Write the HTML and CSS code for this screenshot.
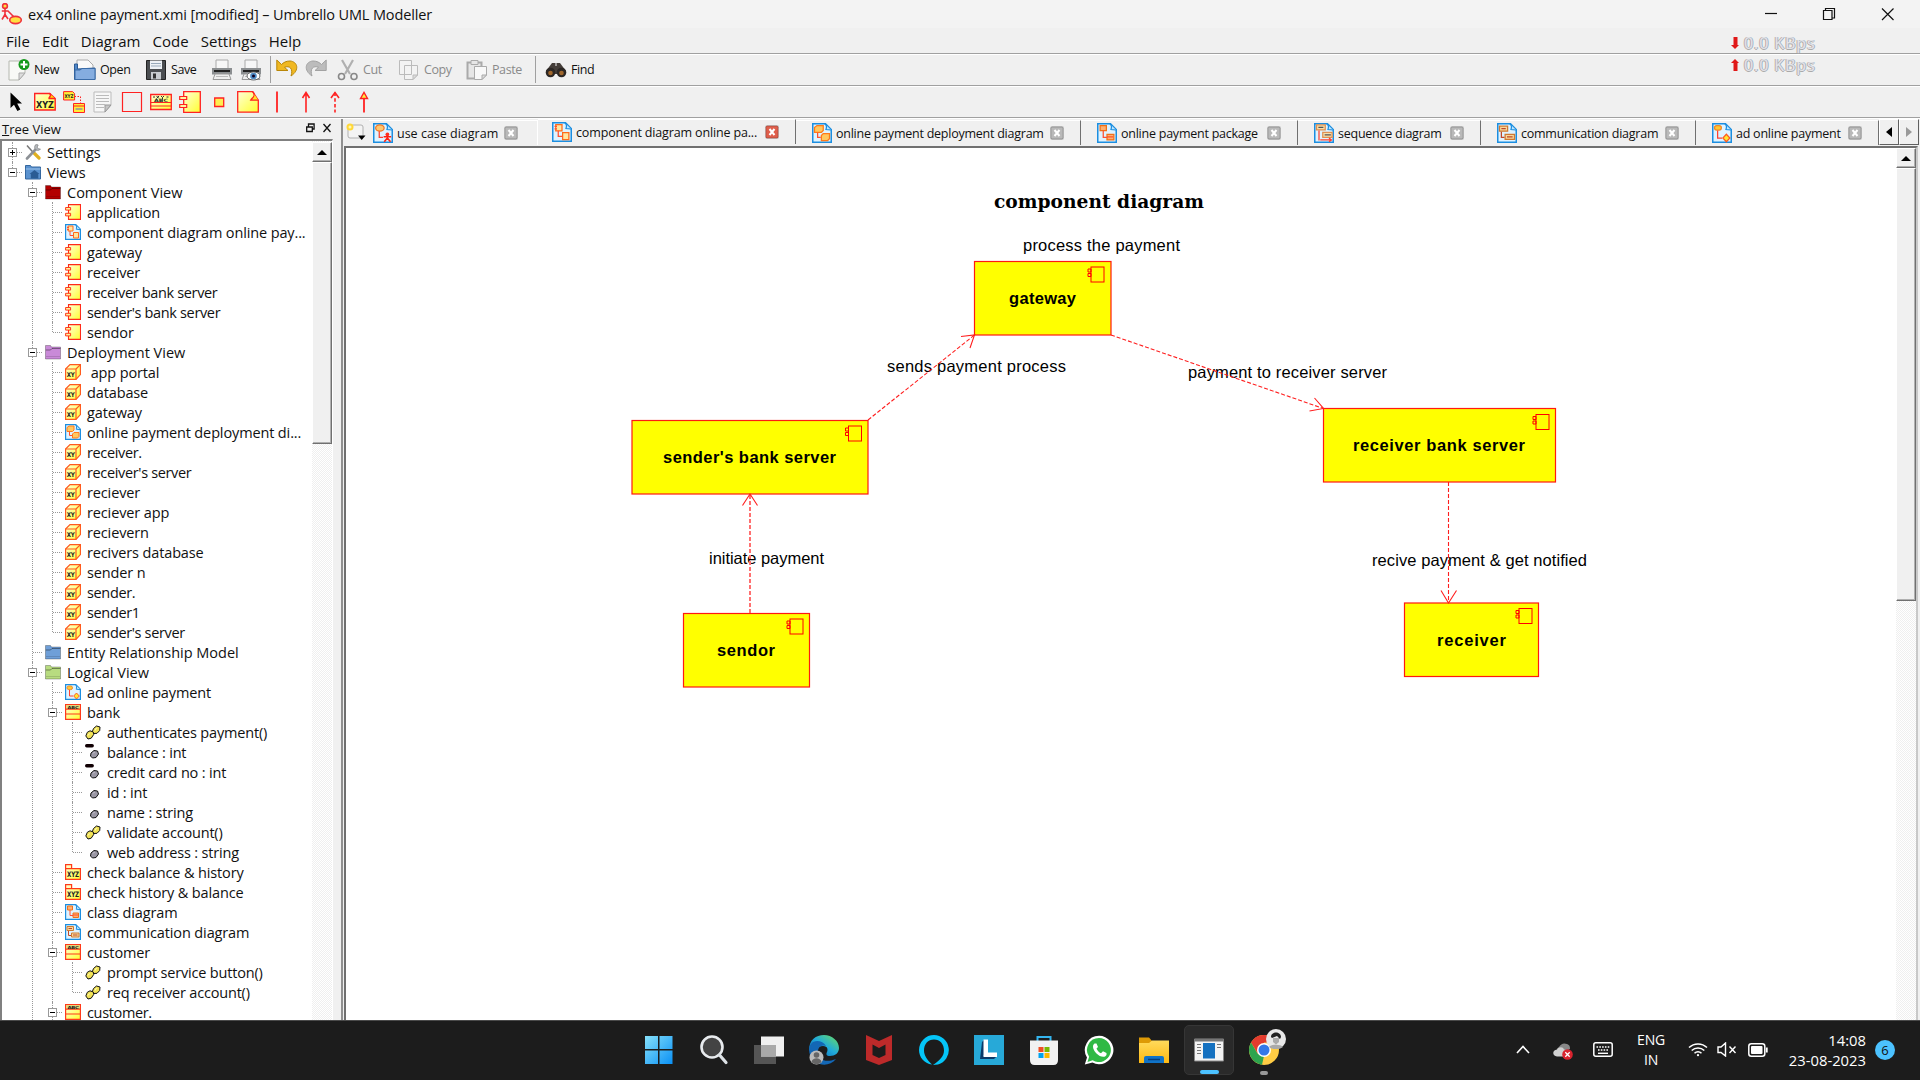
FILE: index.html
```html
<!DOCTYPE html>
<html lang="en">
<head>
<meta charset="utf-8">
<title>ex4 online payment.xmi [modified] – Umbrello UML Modeller</title>
<link rel="stylesheet" href="styles.css">
</head>
<body>
<svg class="defs" width="0" height="0">
  <defs>
    <linearGradient id="yel" x1="0" y1="0" x2="1" y2="1"><stop offset="0" stop-color="#ffffd8"/><stop offset="1" stop-color="#ffff30"/></linearGradient>
    <linearGradient id="win" x1="0" y1="0" x2="1" y2="1"><stop offset="0" stop-color="#86e1fb"/><stop offset="1" stop-color="#0a90f5"/></linearGradient>
    <linearGradient id="edge" x1="0" y1="1" x2="1" y2="0"><stop offset="0" stop-color="#0c59a4"/><stop offset=".5" stop-color="#1fa9dc"/><stop offset="1" stop-color="#6de05b"/></linearGradient>
    <linearGradient id="gold" x1="0" y1="0" x2="0" y2="1"><stop offset="0" stop-color="#ffdb5c"/><stop offset="1" stop-color="#fdb913"/></linearGradient>
  </defs>
  <symbol id="comp" viewBox="0 0 16 16"><path d="M3.5.6h12v14.8h-12z" fill="url(#yel)" stroke="#ff2a1a" stroke-width="1.1"/><path d="M.6 3.5h5v2.6h-5zM.6 9.3h5v2.6h-5z" fill="#fff0a0" stroke="#ff3a1a"/></symbol>
  <symbol id="page" viewBox="0 0 16 16"><path d="M.6.6h10.2l4.6 4.6v10.2H.6z" fill="#dff3ff" stroke="#1c8ee0" stroke-width="1.2"/><path d="M10.2.8c2 1 1.400 3.200 1 4.400l4 .4" fill="#bfe6ff" stroke="#1c8ee0"/></symbol>
  <symbol id="dcomp" viewBox="0 0 16 16"><use href="#page"/><path d="M3 2h5v5H3zM8.500 8.500h5v5.500h-5z" fill="#ffe6a0" stroke="#ff6a1a"/><path d="M2 3.500h2M2 5.500h2M5 7v4.500h3.500" fill="none" stroke="#ff5030"/></symbol>
  <symbol id="dnode" viewBox="0 0 16 16"><use href="#page"/><path d="M2 3.500 4 2h5v4L7.500 7.500H2zM7.500 10l1.500-1.500h5v4L12.500 14h-5z" fill="#ffc860" stroke="#ff7a1a"/><path d="M4.500 7.500v4H7" fill="none" stroke="#ff5030"/></symbol>
  <symbol id="dclass" viewBox="0 0 16 16"><use href="#page"/><path d="M2.500 2h5v4h-5zM8 9h5.500v4.500H8z" fill="#ffb070" stroke="#f07018"/><path d="M5 6v5.500h3M8 11h5" fill="none" stroke="#ff5030"/></symbol>
  <symbol id="dcomm" viewBox="0 0 16 16"><use href="#page"/><path d="M2 2.500h6.500v4H2zM6.500 9H14v4H6.500z" fill="#f7d79a" stroke="#d07a30"/><path d="M3.500 7v4.500H6M3.500 4.500H7M8 11h4.500" fill="none" stroke="#c04828"/></symbol>
  <symbol id="duse" viewBox="0 0 16 16"><use href="#page"/><ellipse cx="5.500" cy="4" rx="3.400" ry="2.500" fill="#ffc870" stroke="#f07828"/><path d="M5 6.500v5h3" fill="none" stroke="#ff4030"/><circle cx="11.500" cy="9" r="1.500" fill="#ff3020"/><path d="M8.500 11h6M11.500 10v2.500M9 15l2.500-3 2.500 3" fill="none" stroke="#ff2010" stroke-width="1.300"/></symbol>
  <symbol id="dseq" viewBox="0 0 16 16"><use href="#page"/><path d="M2 1.500h7v4H2zM7 7.500h7.500v4H7z" fill="#f7dfaa" stroke="#e09050"/><path d="M3.500 3.500h4M8.500 9.500h5" stroke="#555"/><path d="M4 6v8M5 13.500h9M12 12l2 1.500L12 15" fill="none" stroke="#ff4030"/></symbol>
  <symbol id="dact" viewBox="0 0 16 16"><use href="#page"/><rect x="2" y="2" width="5.500" height="3.600" rx="1.800" fill="#ffc830" stroke="#f08828"/><path d="M4.500 6v6h3.500" fill="none" stroke="#ff4030"/><path d="m11.500 9 2.800 3-2.800 3-2.800-3z" fill="#ffe830" stroke="#ff5a20"/></symbol>
  <symbol id="node" viewBox="0 0 16 16"><path d="M.6 5 5 .6h10.400v10L11 15.400H.6z" fill="url(#yel)" stroke="#ff5a1e" stroke-width="1.200"/><path d="M.6 5H11v10.400M11 5 15.400.6" fill="none" stroke="#ff5a1e" stroke-width="1.200"/><text x="1.700" y="12.800" font-size="6.500" textLength="8" lengthAdjust="spacingAndGlyphs" class="glyph">XY</text></symbol>
  <symbol id="pkg" viewBox="0 0 16 16"><path d="M.6.6h6v4h-6zM.6 4.600h14.800v10.800H.6z" fill="url(#yel)" stroke="#ff3a1a" stroke-width="1.200"/><text x="2" y="13" font-size="7.500" textLength="12" lengthAdjust="spacingAndGlyphs" class="glyph">XYZ</text></symbol>
  <symbol id="class" viewBox="0 0 16 16" overflow="visible"><path d="M.6.6h14.800v14.800H.6z" fill="url(#yel)" stroke="#ff3a1a" stroke-width="1.200"/><path d="M1.200 1.200h13.600v3.400H1.200z" fill="#e0d878"/><path d="M0 5.200h16M0 10h16" stroke="#ff3a1a" stroke-width="1.200"/><text x="2.500" y="4.500" font-size="4" textLength="11" lengthAdjust="spacingAndGlyphs" class="glyph">ABC</text></symbol>
  <symbol id="folder" viewBox="0 0 16 16"><path d="M.5 1.500h5l1 1.500h9v12H.5z" fill="currentColor" stroke="#0004"/><path d="M.8 6 5.500 6 7 4.500h8.500" fill="none" stroke="#0006"/><path d="M1 12.500h14" stroke="#0002"/></symbol>
  <symbol id="views" viewBox="0 0 16 16"><path d="M.5 1.500h5l1 1.500h9v12H.5z" fill="#5a92cf" stroke="#34679f"/><path d="M.8 5h14.700" stroke="#9cc2ea"/><path d="m9.500 6 5 4h-1.200v4.500h-7.500V10H4.500z" fill="#2a5c94"/></symbol>
  <symbol id="tools" viewBox="0 0 16 16"><path d="m2 1.500 8 9" stroke="#777" stroke-width="1.500"/><path d="m9.500 9.500 4.500 4.500" stroke="#e0b020" stroke-width="3.200" stroke-linecap="round"/><path d="m2 14.500 9-9.500" stroke="#8d9196" stroke-width="2.600" stroke-linecap="round"/><path d="M10.500.8c-1.500 2-1 4 .5 5s3.500.8 4.500-.8l-2.300-.3-1-1.600 1-2.100c-1-.6-2-.5-2.700-.2z" fill="#b4b8bc" stroke="#777" stroke-width=".6"/></symbol>
  <symbol id="op" viewBox="0 0 16 16"><path d="M7 8.500 8.500 4.500 11.500 2l3.500 1-.3 3.500L12 9.300l-3.300.2z" fill="#f2e356" stroke="#111"/><path d="M.8 12 2.300 8.300 5 6.800l3.300 1.200.4 2.500-2.500 3.700-3.200.800z" fill="#f2e356" stroke="#111"/><path d="m3 11.500 1.500-2M10 6.500l1.500-2.500" stroke="#fffbc0"/></symbol>
  <symbol id="attr" viewBox="0 0 16 16"><path d="m6 9 3-2.500 3.500.5 1 3-2.500 3.500-3.500.5L5.500 12z" fill="#9a97a4" stroke="#111"/><path d="M8 9.500 9.500 8" stroke="#d8d6e0"/></symbol>
  <symbol id="priv" viewBox="0 0 16 16"><use href="#attr"/><path d="M1.700 1.700h5.500" stroke="#100004" stroke-width="3.400" stroke-linecap="round"/></symbol>
  <symbol id="close" viewBox="0 0 14 14"><rect x=".7" y=".7" width="12.600" height="12.600" rx="1.500" fill="currentColor" stroke="#0003" stroke-width="1.400"/><path d="m4.500 4 5 6M9.500 4l-5 6" stroke="#fff" stroke-width="2"/></symbol>
  <symbol id="printer" viewBox="0 0 22 22"><path d="M5 1h12v9H5z" fill="#f7f7f7" stroke="#aaa"/><path d="M1 9h20v6.500H1z" fill="#8b8e90"/><path d="M3 12h16" stroke="#222" stroke-width="2"/><path d="m4 15-2 5.500h18L18 15z" fill="#eee" stroke="#999"/><path d="M5 17.500h12" stroke="#bbb"/></symbol>
</svg>

<header class="titlebar">
  <svg class="app-icon" viewBox="0 0 22 22"><g fill="#ffe040" stroke="#f0303a" stroke-width="1.600"><circle cx="4" cy="3" r="2.400"/><path d="M4 5.500v6M.8 8h6.800M4 11.500 1 16.500M4 11.500l3 4.500M7 8l7 7" fill="none"/><ellipse cx="14.500" cy="17" rx="5.800" ry="3.600"/></g></svg>
  <span class="title">ex4 online payment.xmi [modified] – Umbrello UML Modeller</span>
  <svg class="winbtns" viewBox="0 0 150 28" fill="none" stroke="#111" stroke-width="1.200"><path d="M5 13.500h12"/><path d="M63.500 10.500h8.500v9h-8.500zM65.500 10.500v-2h9v9.500h-2.500"/><path d="m122 8.500 11.500 11.500M133.500 8.500 122 20"/></svg>
</header>
<nav class="menubar"><span>File</span><span>Edit</span><span>Diagram</span><span>Code</span><span>Settings</span><span>Help</span></nav>

<div class="toolbar main-tools">
  <span class="tool"><svg viewBox="0 0 22 22"><path d="M1 2h16v12l-6 7H1z" fill="#f8f9f6" stroke="#b5b8b0"/><path d="M17 14h-6v7z" fill="#ddd" stroke="#aaa"/><circle cx="16" cy="5.500" r="5.500" fill="#159a1c"/><path d="M16 2v7M12.500 5.500h7" stroke="#fff" stroke-width="2"/></svg>New</span>
  <span class="tool"><svg viewBox="0 0 22 22"><path d="M3 1h11l5 5v8H3z" fill="#fafafa" stroke="#aaa"/><path d="M.5 5h3v5l17.500-1v11.500H.5z" fill="#4f87c8" stroke="#2c5a94"/><path d="M1 11h5l2-1.500h13V20.500H1z" fill="#85ade0" stroke="#3b6ca8"/></svg>Open</span>
  <span class="tool"><svg viewBox="0 0 22 22"><path d="M1.500 1.500h19v19h-19z" fill="#4a4d50" stroke="#222"/><path d="M5 1.500h12v8.500H5z" fill="#eef2f6"/><path d="M6 4.500h10M6 7h10" stroke="#9ab"/><path d="M6 13h10v7.500H6z" fill="#c8ccd0"/><path d="M8 14.500h3v5H8z" fill="#333"/></svg>Save</span>
  <span class="tool"><svg viewBox="0 0 22 22"><use href="#printer"/></svg></span>
  <span class="tool"><svg viewBox="0 0 22 22"><use href="#printer"/><ellipse cx="13.500" cy="17" rx="6.500" ry="4" fill="#fff" stroke="#666"/><circle cx="13.500" cy="17" r="3.300" fill="#4f8cc4"/><circle cx="13.500" cy="17" r="1.500" fill="#102"/></svg></span>
  <i class="sep"></i>
  <span class="tool"><svg viewBox="0 0 22 22"><path d="M.8 1v10.500H12L8.500 8.300c5-2 9 1.200 6.500 8.700 9-6 6.500-14.500-1-15-4 0-6.500 1.500-8.500 3.500z" fill="#f0b822" stroke="#b98607"/></svg></span>
  <span class="tool"><svg viewBox="0 0 22 22"><path d="M21.200 1v10.500H10L13.500 8.300c-5-2-9 1.200-6.500 8.700-9-6-6.500-14.500 1-15 4 0 6.500 1.500 8.500 3.500z" fill="#bcbcbc" stroke="#a2a2a2"/></svg></span>
  <span class="tool off"><svg viewBox="0 0 22 22" fill="none"><path d="m5 1 8 14M16 1 8 15" stroke="#b0b0b0" stroke-width="2.200"/><circle cx="4.500" cy="17.500" r="3" stroke="#888" stroke-width="1.600"/><circle cx="17" cy="17.500" r="3" stroke="#888" stroke-width="1.600"/></svg>Cut</span>
  <span class="tool off"><svg viewBox="0 0 22 22" fill="#f3f3f3" stroke="#bbb"><path d="M1.500 1.500h12v14h-12zM6.500 6.500h13V16l-4.500 4.500H6.500z"/><path d="M19.500 16H15v4.500z" fill="#ddd"/></svg>Copy</span>
  <span class="tool off"><svg viewBox="0 0 22 22" fill="#e6e6e6" stroke="#aaa"><path d="M1.500 3.500h14v16h-14z" stroke-width="2"/><path d="M5 1.500h7v4H5z"/><path d="M8.500 7.500h12V16L16 20.500H8.500z" fill="#f8f8f8"/><path d="M20.500 16H16v4.500z" fill="#ddd"/></svg>Paste</span>
  <i class="sep"></i>
  <span class="tool"><svg viewBox="0 0 22 22"><path d="M7 4h3.500v3h1V4H15l6 8v3H1v-3z" fill="#443d38"/><circle cx="5.500" cy="13.500" r="4.800" fill="#2c2724"/><circle cx="16.500" cy="13.500" r="4.800" fill="#2c2724"/><circle cx="5.500" cy="14" r="2.300" fill="#a0672c"/><circle cx="16.500" cy="14" r="2.300" fill="#a0672c"/></svg>Find</span>
</div>

<div class="toolbar uml-tools">
  <svg viewBox="0 0 22 22"><path d="M5.500 1.500v15.500l3.500-3.200 3.400 6.200 3-1.600-3.200-6h4.800z" fill="#000"/></svg>
  <svg viewBox="0 0 22 22"><path d="M.7 2.500h15l5.500 5V19H.7z" fill="url(#yel)" stroke="#f22" stroke-width="1.400"/><path d="M15.500 2.500c3 1.500-1 4-.5 5h6" fill="#ffe000" stroke="#f22" stroke-width="1.400"/><text x="2" y="16.500" font-size="9.500" textLength="18" lengthAdjust="spacingAndGlyphs" class="glyph">XYZ</text></svg>
  <svg viewBox="0 0 22 22"><path d="M.6.600h9l2 2V9H.6zM10.500 12.500h11v9h-11z" fill="#ffee38" stroke="#f22"/><path d="M11.500 5.500h6v7" stroke="#f22" stroke-dasharray="1.500 1.500" fill="none"/><path d="M10.500 15h11" stroke="#f22"/><text x="1.500" y="7" font-size="5" textLength="9" lengthAdjust="spacingAndGlyphs" class="glyph">XYZ</text><path d="M12.500 18h7" stroke="#aa8" stroke-width="2"/></svg>
  <svg viewBox="0 0 22 22"><path d="M2 1h17v13l-6 7H2z" fill="#f7f7f7" stroke="#bbb"/><path d="M4 4.500h13M4 7.500h13M4 10.500h13M4 13.500h9M4 16.500h8" stroke="#bbb"/><path d="M19 14h-6v7z" fill="#c6c6c6" stroke="#999"/></svg>
  <svg viewBox="0 0 22 22"><path d="M1.500 1.500h19v19h-19z" fill="none" stroke="#f22" stroke-width="1.200"/></svg>
  <svg viewBox="0 0 22 22"><path d="M.7 3.500h20.600v15H.7z" fill="url(#yel)" stroke="#f22" stroke-width="1.300"/><path d="M.7 11.500h20.600M.7 15h20.600" stroke="#f22" stroke-width="1.200"/><path d="M3 6h2M6.500 5l2.500 2.500M9 5 6.500 7.500M11 5l1.500 1.500L14 5M12.500 6.500v1.500M16.500 6h2" stroke="#333" fill="none"/><text x="4" y="11" font-size="4.500" textLength="14" lengthAdjust="spacingAndGlyphs" class="glyph">ABC</text></svg>
  <svg viewBox="0 0 22 22"><path d="M4.700.7h16.600v20.600H4.700z" fill="url(#yel)" stroke="#f22" stroke-width="1.300"/><path d="M.7 5.500h7v3h-7zM.7 13.500h7v3h-7z" fill="#fff6a0" stroke="#f22" stroke-width="1.200"/></svg>
  <svg viewBox="0 0 22 22"><path d="M6.700 7h9v8.500h-9z" fill="#ffee50" stroke="#f22" stroke-width="1.300"/></svg>
  <svg viewBox="0 0 22 22"><path d="M.7.7h15l5.600 8.500v12H.7z" fill="url(#yel)" stroke="#f22" stroke-width="1.300"/><path d="M15.700.7c4 4-1 6.500-2 8.500h7.600" fill="#ffe720" stroke="#f22" stroke-width="1.300"/></svg>
  <svg viewBox="0 0 22 22"><path d="M11 .5v21" stroke="#f22" stroke-width="1.800"/></svg>
  <svg viewBox="0 0 22 22"><path d="M11 1.500v20M7.500 7 11 1.500 14.500 7" fill="none" stroke="#f22" stroke-width="1.600"/></svg>
  <svg viewBox="0 0 22 22"><path d="M11 1.500v20" stroke="#f22" stroke-width="1.600" stroke-dasharray="3.500 2.200"/><path d="M7 7 11 1.500 15 7" fill="none" stroke="#f22" stroke-width="1.600"/></svg>
  <svg viewBox="0 0 22 22"><path d="M11 6v15.500" stroke="#f22" stroke-width="1.800"/><path d="M7.500 7.500 11 1.500l3.500 6z" fill="#fff040" stroke="#f22" stroke-width="1.400"/></svg>
</div>

<main class="workspace">
  <aside class="dock">
    <div class="dock-head"><span><u>T</u>ree View</span><svg viewBox="0 0 28 10" fill="none" stroke="#111" stroke-width="1.300"><path d="M.7 4h5.600v4.500H.7zM2.500 4V1h5.600v5H6.500"/><path d="m17.500 1 7 8M24.500 1l-7 8"/></svg></div>
    <div class="tree-frame">
      <ul class="tree">
        <li><div class="row"><b class="x plus"></b><svg><use href="#tools"/></svg>Settings</div></li>
        <li><div class="row"><b class="x"></b><svg><use href="#views"/></svg>Views</div>
          <ul>
            <li><div class="row"><b class="x"></b><svg class="red"><use href="#folder"/></svg>Component View</div>
              <ul>
                <li><div class="row"><svg><use href="#comp"/></svg>application</div></li>
                <li><div class="row"><svg><use href="#dcomp"/></svg>component diagram online pay...</div></li>
                <li><div class="row"><svg><use href="#comp"/></svg>gateway</div></li>
                <li><div class="row"><svg><use href="#comp"/></svg>receiver</div></li>
                <li><div class="row tight"><svg><use href="#comp"/></svg>receiver bank server</div></li>
                <li><div class="row tight"><svg><use href="#comp"/></svg>sender's bank server</div></li>
                <li><div class="row"><svg><use href="#comp"/></svg>sendor</div></li>
              </ul></li>
            <li><div class="row"><b class="x"></b><svg class="violet"><use href="#folder"/></svg>Deployment View</div>
              <ul>
                <li><div class="row"><svg><use href="#node"/></svg>&nbsp;app portal</div></li>
                <li><div class="row"><svg><use href="#node"/></svg>database</div></li>
                <li><div class="row"><svg><use href="#node"/></svg>gateway</div></li>
                <li><div class="row"><svg><use href="#dnode"/></svg>online payment deployment di...</div></li>
                <li><div class="row tight"><svg><use href="#node"/></svg>receiver.</div></li>
                <li><div class="row tight"><svg><use href="#node"/></svg>receiver's server</div></li>
                <li><div class="row"><svg><use href="#node"/></svg>reciever</div></li>
                <li><div class="row"><svg><use href="#node"/></svg>reciever app</div></li>
                <li><div class="row"><svg><use href="#node"/></svg>recievern</div></li>
                <li><div class="row"><svg><use href="#node"/></svg>recivers database</div></li>
                <li><div class="row"><svg><use href="#node"/></svg>sender n</div></li>
                <li><div class="row tight"><svg><use href="#node"/></svg>sender.</div></li>
                <li><div class="row tight"><svg><use href="#node"/></svg>sender1</div></li>
                <li><div class="row tight"><svg><use href="#node"/></svg>sender's server</div></li>
              </ul></li>
            <li><div class="row"><svg class="blue"><use href="#folder"/></svg>Entity Relationship Model</div></li>
            <li class="open"><div class="row"><b class="x"></b><svg class="green"><use href="#folder"/></svg>Logical View</div>
              <ul>
                <li><div class="row"><svg><use href="#dact"/></svg>ad online payment</div></li>
                <li><div class="row"><b class="x"></b><svg><use href="#class"/></svg>bank</div>
                  <ul>
                    <li><div class="row"><svg><use href="#op"/></svg>authenticates payment()</div></li>
                    <li><div class="row"><svg><use href="#priv"/></svg>balance : int</div></li>
                    <li><div class="row"><svg><use href="#priv"/></svg>credit card no : int</div></li>
                    <li><div class="row"><svg><use href="#attr"/></svg>id : int</div></li>
                    <li><div class="row"><svg><use href="#attr"/></svg>name : string</div></li>
                    <li><div class="row"><svg><use href="#op"/></svg>validate account()</div></li>
                    <li><div class="row"><svg><use href="#attr"/></svg>web address : string</div></li>
                  </ul></li>
                <li><div class="row"><svg><use href="#pkg"/></svg>check balance &amp; history</div></li>
                <li><div class="row"><svg><use href="#pkg"/></svg>check history &amp; balance</div></li>
                <li><div class="row"><svg><use href="#dclass"/></svg>class diagram</div></li>
                <li><div class="row"><svg><use href="#dcomm"/></svg>communication diagram</div></li>
                <li><div class="row"><b class="x"></b><svg><use href="#class"/></svg>customer</div>
                  <ul>
                    <li><div class="row"><svg><use href="#op"/></svg>prompt service button()</div></li>
                    <li><div class="row"><svg><use href="#op"/></svg>req receiver account()</div></li>
                  </ul></li>
                <li class="open"><div class="row tight"><b class="x"></b><svg><use href="#class"/></svg>customer.</div></li>
              </ul></li>
          </ul></li>
      </ul>
      <div class="scroll tree-scroll"><div class="btn"></div><div class="thumb"></div></div>
    </div>
  </aside>

  <section class="editor">
    <div class="tabs">
      <span class="newtab"><svg viewBox="0 0 22 18"><rect x="2" y="2" width="15" height="13" rx="2" fill="#f4f4f4" stroke="#b0b0b0"/><circle cx="4" cy="4" r="3.500" fill="#ffd83a"/><circle cx="4" cy="4" r="1.500" fill="#fff6b0"/><path d="M12 12.500h7.500L15.700 17z" fill="#000"/></svg></span>
      <span class="tab first"><svg class="ti"><use href="#duse"/></svg>use case diagram<svg class="cl"><use href="#close"/></svg></span>
      <span class="tab active"><svg class="ti"><use href="#dcomp"/></svg>component diagram online pa...<svg class="cl"><use href="#close"/></svg></span>
      <span class="tab"><svg class="ti"><use href="#dnode"/></svg>online payment deployment diagram<svg class="cl"><use href="#close"/></svg></span>
      <span class="tab"><svg class="ti"><use href="#dclass"/></svg>online payment package<svg class="cl"><use href="#close"/></svg></span>
      <span class="tab"><svg class="ti"><use href="#dseq"/></svg>sequence diagram<svg class="cl"><use href="#close"/></svg></span>
      <span class="tab"><svg class="ti"><use href="#dcomm"/></svg>communication diagram<svg class="cl"><use href="#close"/></svg></span>
      <span class="tab"><svg class="ti"><use href="#dact"/></svg>ad online payment<svg class="cl"><use href="#close"/></svg></span>
      <span class="tabarrow"><svg viewBox="0 0 6 10"><path d="M6 0v10L0 5z"/></svg></span>
      <span class="tabarrow dim"><svg viewBox="0 0 6 10"><path d="M0 0v10l6-5z"/></svg></span>
    </div>
    <div class="canvas-frame">
      <svg class="diagram" viewBox="346 148 1550 872" preserveAspectRatio="xMinYMin">
        <defs>
          <g id="cmark" fill="none" stroke="#f00"><rect x="-19.500" y="6" width="13" height="15"/><path d="M-22.500 8h3v3h-3zM-22.500 12.500h3v3h-3z"/></g>
        </defs>
        <g fill="#ff0" stroke="#ff1a10" stroke-width="1.200">
          <rect x="974.500" y="261.500" width="136.500" height="73.500"/>
          <rect x="632" y="420.500" width="236" height="73.500"/>
          <rect x="1323.500" y="408.500" width="232" height="73.500"/>
          <rect x="683.500" y="613.500" width="126" height="73.500"/>
          <rect x="1404.500" y="603" width="134" height="73.500"/>
        </g>
        <use href="#cmark" x="1110.500" y="261"/><use href="#cmark" x="868" y="420"/><use href="#cmark" x="1555.500" y="408.500"/><use href="#cmark" x="809.500" y="613"/><use href="#cmark" x="1538.500" y="602.500"/>
        <g class="lbl bold">
          <text x="1009" y="304" textLength="67">gateway</text>
          <text x="663" y="462.700" textLength="173">sender's bank server</text>
          <text x="1353" y="450.700" textLength="172">receiver bank server</text>
          <text x="717" y="655.700" textLength="58">sendor</text>
          <text x="1437" y="645.500" textLength="69">receiver</text>
        </g>
        <g class="lbl">
          <text x="1023" y="251" textLength="157">process the payment</text>
          <text x="887" y="372" textLength="179">sends payment process</text>
          <text x="1188" y="377.700" textLength="199">payment to receiver server</text>
          <text x="709" y="564" textLength="115">initiate payment</text>
          <text x="1372" y="566" textLength="215">recive payment &amp; get notified</text>
        </g>
        <text class="heading" x="994" y="207.500" textLength="210" lengthAdjust="spacingAndGlyphs">component diagram</text>
        <g fill="none" stroke="#ff1e1e" stroke-width="1.100">
          <path d="M868 420 974.500 335M1111 335l212.500 73.500M1448.500 482v121" stroke-dasharray="4 2"/>
          <path d="M750 613V494" stroke="#ff7070" stroke-width="2" stroke-dasharray="4 2"/>
          <path d="m961 336.500 13.500-1.500L970 348M1314.500 398l9 10.500-14 2.500M1441 590.500l7.500 12.500 8-12.500M742.500 505.500 750 494l7.500 11.500"/>
        </g>
      </svg>
      <div class="scroll main-scroll"><div class="btn"></div><div class="thumb"></div></div>
    </div>
  </section>
</main>

<div class="netmeter">
  <div><svg viewBox="0 0 8 12"><path d="M2.500 0h4v8H8l-4 4-4-4h2.500z" fill="#e01818"/></svg>0.0 KBps</div>
  <div><svg viewBox="0 0 8 12"><path d="M2.500 12h4V4H8L4 0 0 4h2.500z" fill="#e01818"/></svg>0.0 KBps</div>
</div>

<footer class="taskbar">
  <div class="apps">
    <span><svg viewBox="0 0 30 30"><path d="M1 1h13v13H1zM15.500 1h13v13h-13zM1 15.500h13v13.500H1zM15.500 15.500h13v13.500h-13z" fill="url(#win)"/></svg></span>
    <span><svg viewBox="0 0 30 30"><circle cx="13" cy="12" r="10.500" fill="#444" stroke="#e8ebee" stroke-width="2.600"/><path d="m20.500 20 6.500 7.500" stroke="#dde2e6" stroke-width="3.200" stroke-linecap="round"/></svg></span>
    <span><svg viewBox="0 0 30 30"><path d="M0 10h22v19H0z" fill="#555"/><path d="M7 1.500h23v20H7z" fill="#f0f0f0"/><path d="M7 10h15v11.500H7z" fill="#a9a9a9"/></svg></span>
    <span><svg viewBox="0 0 30 30"><path d="M0 15C0 5 7 0 15 0s15 6 15 13c0 5-4 8-9 8-4 0-4-2-3-4s1-6-4-6C8 11 5 15 5 20z" fill="url(#edge)"/><path d="M2 9C6 4 14 6 17 11c-5-2-9 2-8 8s8 9 18 5C20 33 5 31 1 20-.5 15 0 12 2 9z" fill="#1367b5"/><circle cx="7.500" cy="22.500" r="7" fill="#bbb"/><circle cx="7.500" cy="20" r="2.800" fill="#666"/><path d="M2.500 27c1-5 9-5 10 0-3 3-7 3-10 0z" fill="#666"/></svg></span>
    <span><svg viewBox="0 0 30 30"><path d="m2 0 13 6L28 0v25l-13 5-13-5z" fill="#bd2a2a"/><path d="M8.500 9.500 15 13l6.500-3.500V20L15 23l-6.500-3z" fill="#1c1c1c"/></svg></span>
    <span><svg viewBox="0 0 30 30"><path d="M15 0a15 15 0 0 1 4 29.400l-5 .6c7-5 11-9 11-14.500C25 9 21 4.500 15 4.500S5 9 5 15.500c0 5 3 9 8 14C5 28.500 0 22 0 15A15 15 0 0 1 15 0z" fill="#05c5f8"/></svg></span>
    <span><svg viewBox="0 0 30 30"><path d="M0 0h30v30H0z" fill="#27a9d8"/><path d="m6 24 4-4V5L8 7zM6 24h14l3-3H9z" fill="#0b3a68"/><path d="M9.500 4.500h4.500v13h9V22H9.500z" fill="#fff"/></svg></span>
    <span><svg viewBox="0 0 30 30"><path d="M8.500 7V2h13v5" fill="none" stroke="#34b5ef" stroke-width="2"/><path d="M1 5.500h28V25q0 5-4.500 5h-19Q1 30 1 25z" fill="#f2f2f2"/><path d="M9.500 12h5v5h-5z" fill="#f04e23"/><path d="M15.500 12h5v5h-5z" fill="#7ab800"/><path d="M9.500 18h5v5h-5z" fill="#00a3ee"/><path d="M15.500 18h5v5h-5z" fill="#fdb800"/></svg></span>
    <span><svg viewBox="0 0 30 30"><path d="M15 .8a14.200 14.200 0 1 1-6.500 26.700L.8 29.500l2.200-7A14.200 14.200 0 0 1 15 .8z" fill="#fff"/><path d="M15 3a12 12 0 1 1-6.300 22.300L3.500 27l1.600-5.200A12 12 0 0 1 15 3z" fill="#2fb944"/><path d="M10.500 8.500c-3 2-1 7 2 10s8 5 10 1.500l0-2-3.500-1.800-2 2c-2-.7-4-3-4.500-4.700l1.500-1.500L12.500 8.500z" fill="#fff"/></svg></span>
    <span><svg viewBox="0 0 30 30"><path d="M0 2.500h10l3 3.500v5H0z" fill="#dd9a06"/><path d="M0 8h10l3-2.500h17V28H0z" fill="url(#gold)"/><path d="M5 28v-5q0-2 2-2h16q2 0 2 2v5z" fill="#1073c8"/><path d="M9 24.500h12" stroke="#063f7c" stroke-width="1.500"/></svg></span>
    <span class="current"><svg viewBox="0 0 30 30"><path d="M.5 4h29v22H.5z" fill="#f4f4f4" stroke="#888"/><path d="M.5 4h29v2.500H.5z" fill="#777"/><path d="M9 8h12v15.500H9z" fill="#1571c0"/><path d="M3 9.500h4M3 12.500h4M3 15.500h4M3 18.500h4M23 9.500h4M23 12.500h4" stroke="#777"/></svg></span>
    <span class="running"><svg viewBox="0 0 30 30"><circle cx="15" cy="15" r="15" fill="#fc4"/><path d="M15 15 2 7.500A15 15 0 0 1 28 7.500H15z" fill="#e33b2e"/><path d="M2 7.500 9 19l6-11.500z" fill="#e33b2e"/><path d="M2 7.500 8.500 18.500 14 21l1 0-2 8.800A15 15 0 0 1 2 7.500z" fill="#2da44e"/><circle cx="15" cy="15" r="7" fill="#fff"/><circle cx="15" cy="15" r="5.500" fill="#3478e8"/></svg>
      <svg class="avatar" viewBox="0 0 20 20"><circle cx="10" cy="10" r="10" fill="#e8e8e8"/><path d="M5 8c0-6 10-6 10 0l-1 2-3-3-5 2z" fill="#222"/><path d="M7 9h6v4l-3 2.500L7 13zM3 18c2-3 12-3 14 0-4 3-10 3-14 0z" fill="#aaa"/></svg></span>
  </div>
  <div class="tray">
    <svg class="chev" viewBox="0 0 14 9"><path d="m1 8 6-6.500L13 8" fill="none" stroke="#fff" stroke-width="1.600"/></svg>
    <svg class="cloud" viewBox="0 0 20 17"><path d="M5 12a5 5 0 0 1 1-8q3-5 8-3c3 1 3 3 3 5z" fill="#888"/><path d="M4 13.500C-1 13-1 7 4 6.500c2-3 6-3 7 0 3 0 4 3 4 7z" fill="#d0d0d0"/><circle cx="14.500" cy="11.500" r="5.300" fill="#d9232e"/><path d="m12.300 9.300 4.400 4.400M16.700 9.300l-4.400 4.400" stroke="#fff" stroke-width="1.300"/></svg>
    <svg class="kbd" viewBox="0 0 20 15"><rect x=".8" y=".8" width="18.400" height="13.400" rx="2" fill="none" stroke="#fff" stroke-width="1.500"/><path d="M3.500 5h13M5 8h11" stroke="#fff" stroke-width="1.600" stroke-dasharray="1.600 1.200"/><path d="M5 11.300h10" stroke="#fff" stroke-width="1.400"/></svg>
    <div class="lang">ENG<br>IN</div>
    <svg class="wifi" viewBox="0 0 20 15" fill="none" stroke="#fff" stroke-width="1.500"><path d="M1 5.500a13 13 0 0 1 18 0M3.700 8.500a9 9 0 0 1 12.600 0M6.500 11.300a5 5 0 0 1 7 0"/><circle cx="10" cy="13.200" r="1.100" fill="#fff" stroke="none"/></svg>
    <svg class="vol" viewBox="0 0 20 15" fill="none" stroke="#fff" stroke-width="1.400"><path d="M1 5h3l4.500-4v13L4 10.500H1zM12.500 4.500l6 6.500M18.500 4.500l-6 6.500"/></svg>
    <svg class="batt" viewBox="0 0 20 14"><rect x=".8" y=".8" width="16" height="12.400" rx="2.500" fill="none" stroke="#fff" stroke-width="1.500"/><rect x="3" y="3" width="11.500" height="8" rx="1" fill="#fff"/><path d="M18.800 4.500v5" stroke="#fff" stroke-width="1.800"/></svg>
    <div class="clock">14:08<br>23-08-2023</div>
    <span class="count">6</span>
  </div>
</footer>
</body>
</html>
```
FILE: styles.css
```css
* { box-sizing: border-box; }
body {
  margin: 0;
  width: 1920px;
  height: 1080px;
  overflow: hidden;
  display: flex;
  flex-direction: column;
  background: #f0f0f0;
  color: #111;
  font-family: "Open Sans", "Noto Sans", sans-serif;
  position: relative;
}
svg { display: block; flex: none; }
.defs { position: absolute; }
.glyph { font-family: "DejaVu Sans", sans-serif; font-weight: bold; fill: #222; }

/* title and menu */
.titlebar { height: 28px; background: #f3f3f3; display: flex; align-items: center; font-size: 14.5px; letter-spacing: -.14px; }
.app-icon { width: 22px; height: 22px; margin: 0 5px 0 1px; }
.title { flex: 1; padding-top: 1px; }
.winbtns { width: 150px; height: 28px; margin-right: 10px; }
.menubar { height: 27px; padding: 0 0 1px 6px; display: flex; align-items: center; gap: 12px; font-size: 15px; border-bottom: 1px solid #fff; box-shadow: inset 0 -1px #a0a0a0; letter-spacing: .04px; }

/* toolbars */
.toolbar { height: 32px; border-bottom: 1px solid #fff; box-shadow: inset 0 -1px #a0a0a0; display: grid; align-items: center; align-content: center; }
.main-tools { grid-template-columns: 66px 71px 66px 29px 30px 6px 29px 32px 61px 68px 69px 10px 60px; padding-left: 8px; padding-bottom: 2px; }
.main-tools svg { width: 22px; height: 22px; }
.tool { display: flex; align-items: center; gap: 4px; font-size: 12.5px; letter-spacing: -.4px; white-space: nowrap; }
.off { color: #8a8a8a; }
.sep { width: 1px; height: 27px; background: #a0a0a0; }
.uml-tools { grid-template-columns: repeat(13, 29px); justify-items: center; padding-left: 1px; padding-bottom: 2px; }
.uml-tools svg { width: 22px; height: 22px; }

/* workspace */
.workspace { height: 901px; display: flex; overflow: hidden; }
.dock { width: 341px; display: flex; flex-direction: column; border-right: 1px solid #f0f0f0; }
.dock-head { height: 20px; display: flex; align-items: center; justify-content: space-between; padding: 0 7px 0 2px; font-size: 13px; width: 340px; }
.dock-head svg { width: 28px; height: 10px; margin-bottom: 3px; margin-right: -1px; }
.tree-frame { width: 333px; flex: 1; min-height: 0; display: flex; background: #fff; border: solid #808080; border-width: 2px 1px 0 2px; border-right-color: #fff; overflow: hidden; }
.tree, .tree ul { list-style: none; margin: 0; padding: 0; }
.tree { flex: 1; padding-top: 1px; font-size: 14.5px; letter-spacing: 0; overflow: hidden; }
.tree ul { padding-left: 20px; }
.tree ul ul { letter-spacing: -.13px; }
.tree ul ul ul { letter-spacing: -.18px; }
.tree .tight { letter-spacing: -.35px; }
.tree li { position: relative; }
.tree li::before { content: ""; position: absolute; left: 10px; top: 0; bottom: 0; border-left: 1px dotted #999; }
.tree li:last-child:not(.open)::before { bottom: auto; height: 10px; }
.row { height: 20px; padding-left: 23px; display: flex; align-items: center; gap: 6px; white-space: pre; position: relative; }
.row::before { content: ""; position: absolute; left: 11px; top: 10px; width: 9px; border-top: 1px dotted #999; }
.row svg { width: 16px; height: 16px; }
.x { position: absolute; left: 6px; top: 6px; width: 9px; height: 9px; border: 1px solid #999; background: linear-gradient(#000, #000) center / 5px 1px no-repeat #fff; }
.x.plus { background: linear-gradient(#000, #000) center / 5px 1px no-repeat, linear-gradient(#000, #000) center / 1px 5px no-repeat #fff; }
.red { color: #b30000; }
.violet { color: #c98ad8; }
.blue { color: #6f9fd8; }
.green { color: #b8dc80; }

/* scroll bars */
.scroll { background: repeating-conic-gradient(#fff 0 25%, #efefef 0 50%) 0 0 / 2px 2px; flex: none; }
.btn, .thumb { background: #f0f0f0; border: 1px solid; border-color: #fff #707070 #707070 #fff; box-shadow: inset -1px -1px #b0b0b0; }
.btn { height: 20px; display: flex; align-items: center; justify-content: center; }
.btn::before { content: ""; border: solid transparent; border-width: 0 5px 5px; border-bottom-color: #000; }
.tree-scroll { width: 20px; }
.tree-scroll .btn { margin-top: 1px; }
.tree-scroll .thumb { height: 282px; }
.main-scroll { width: 20px; }
.main-scroll .thumb { height: 433px; }

/* editor */
.editor { flex: 1; display: flex; flex-direction: column; border-left: 2px solid #909090; }
.tabs { height: 27px; display: grid; grid-template-columns: 26px 169px 258px 285px 217px 183px 215px 183px 20px 20px; font-size: 12.5px; letter-spacing: -.24px; }
.newtab svg { width: 22px; height: 18px; margin: 4px 0 0 3px; }
.tab { display: flex; align-items: center; gap: 4px; padding: 0 16px; margin: 1px 0 1px; border-right: 1px solid #707070; border-top: 1px solid #fff; white-space: nowrap; }
.tab.first { padding-left: 4px; padding-right: 19px; border-right-color: #fff; letter-spacing: 0; }
.tab.active { padding: 0 16px 0 14px; margin: 0 0 2px; letter-spacing: -.15px; }
.ti { width: 20px; height: 20px; }
.cl { width: 14px; height: 14px; margin-left: auto; color: #b9b9b9; }
.active .cl { color: #df5f4c; }
.tabarrow { margin-bottom: 1px; display: flex; align-items: center; justify-content: center; border: 1px solid; border-color: #fff #606060 #606060 #fff; }
.tabarrow svg { width: 6px; height: 10px; }
.tabarrow.dim { fill: #999; }
.canvas-frame { flex: 1; min-height: 0; display: flex; background: #fff; border: solid #707070; border-width: 2px 2px 0 2px; border-right-color: #c8c8c8; margin-left: 1px; margin-right: 2px; }
.diagram { height: 872px; flex: 1; min-width: 0; }
.lbl { font-family: "Liberation Sans", Arial, sans-serif; font-size: 16.5px; fill: #000; }
.bold { font-weight: bold; }
.heading { font-family: "DejaVu Serif", serif; font-weight: bold; font-size: 18.5px; fill: #000; }

/* transfer-rate overlay */
.netmeter { position: absolute; left: 1731px; top: 32px; display: flex; flex-direction: column; font-size: 16px; letter-spacing: .9px; color: #e4e4e6; text-shadow: 1px 0 #9db4cc, -1px 0 #c0a8a0, 0 1px #aaa; }
.netmeter div { height: 22px; display: flex; align-items: center; gap: 5px; }
.netmeter svg { width: 8px; height: 12px; }

/* taskbar */
.taskbar { height: 60px; background: #1c1c1c; border-top: 1px solid #4a4a4a; color: #fff; display: flex; padding-left: 631px; }
.apps { display: flex; width: 865px; }
.apps > span { width: 55px; height: 59px; display: flex; align-items: center; justify-content: center; position: relative; padding-bottom: 1px; }
.apps svg { width: 30px; height: 30px; }
.apps > .current { background: #2a2a2a; border: 1px solid #363636; border-radius: 5px; width: 50px; height: 50px; margin: 4px 2px 0 3px; }
.current::after, .running::after { content: ""; position: absolute; bottom: 0; left: 15px; width: 19px; height: 4px; border-radius: 2px; background: #4cc2ff; }
.running::after { left: 24px; width: 8px; bottom: 5px; background: #999; }
.apps .avatar { position: absolute; left: 30px; top: 8px; width: 20px; height: 20px; }
.tray { display: flex; align-items: center; flex: 1; padding: 0 0 2px 20px; }
.chev { width: 14px; height: 9px; }
.cloud { width: 20px; height: 17px; margin-left: 23px; margin-top: 4px; }
.kbd { width: 20px; height: 15px; margin-left: 20px; }
.lang { width: 30px; margin-left: 23px; text-align: center; font-size: 14px; line-height: 20px; letter-spacing: -.2px; }
.wifi { width: 20px; height: 15px; margin-left: 22px; }
.vol { width: 20px; height: 15px; margin-left: 9px; }
.batt { width: 20px; height: 14px; margin-left: 11px; }
.clock { width: 98px; text-align: right; font-size: 14.8px; line-height: 20px; }
.count { width: 20px; height: 20px; border-radius: 50%; background: #4cc2ff; color: #111; font-size: 13px; line-height: 20px; text-align: center; margin-left: 9px; }
```
